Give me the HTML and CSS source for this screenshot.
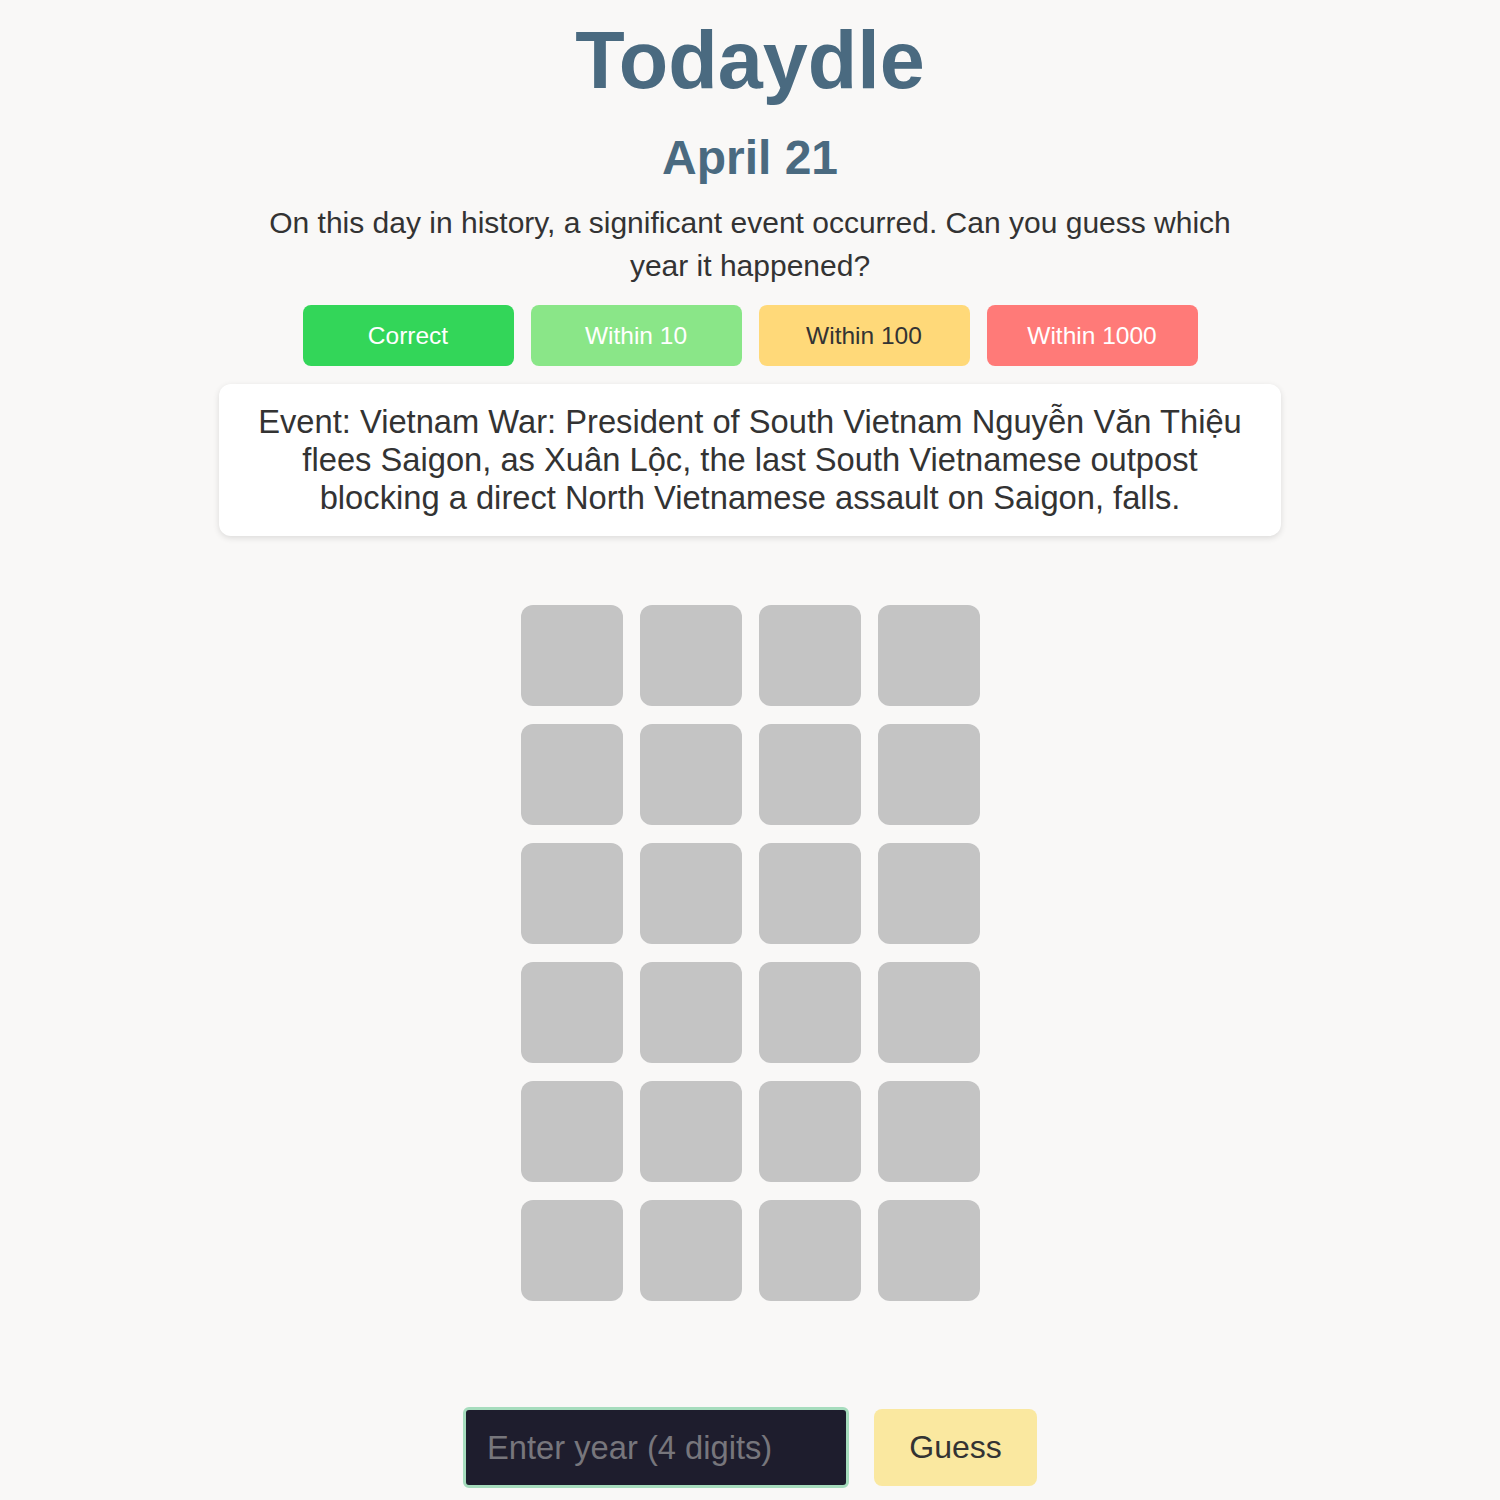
FILE: index.html
```html
<!DOCTYPE html>
<html lang="en">
<head>
<meta charset="utf-8">
<title>Todaydle</title>
<link rel="stylesheet" href="styles.css">
</head>
<body>
<main class="app">
  <h1 class="title">Todaydle</h1>
  <h2 class="date">April 21</h2>
  <p class="intro">On this day in history, a significant event occurred. Can you guess which year it happened?</p>
  <div class="legend">
    <div class="chip chip-correct">Correct</div>
    <div class="chip chip-10">Within 10</div>
    <div class="chip chip-100">Within 100</div>
    <div class="chip chip-1000">Within 1000</div>
  </div>
  <div class="event">Event: Vietnam War: President of South Vietnam Nguyễn Văn Thiệu flees Saigon, as Xuân Lộc, the last South Vietnamese outpost blocking a direct North Vietnamese assault on Saigon, falls.</div>
  <div class="board">
    <div class="tile"></div><div class="tile"></div><div class="tile"></div><div class="tile"></div>
    <div class="tile"></div><div class="tile"></div><div class="tile"></div><div class="tile"></div>
    <div class="tile"></div><div class="tile"></div><div class="tile"></div><div class="tile"></div>
    <div class="tile"></div><div class="tile"></div><div class="tile"></div><div class="tile"></div>
    <div class="tile"></div><div class="tile"></div><div class="tile"></div><div class="tile"></div>
    <div class="tile"></div><div class="tile"></div><div class="tile"></div><div class="tile"></div>
  </div>
  <form class="guess-form">
    <input class="year-input" type="text" placeholder="Enter year (4 digits)">
    <button class="guess-btn" type="button">Guess</button>
  </form>
</main>
</body>
</html>
```

FILE: styles.css
```css
html, body {
  margin: 0;
  padding: 0;
  background: #f9f8f7;
}
body {
  font-family: "Liberation Sans", Arial, sans-serif;
  color: #333333;
}
.app {
  display: flex;
  flex-direction: column;
  align-items: center;
}
.title {
  margin: 14px 0 0;
  font-size: 81px;
  font-weight: 700;
  line-height: 92px;
  color: #4a6a80;
}
.date {
  margin: 24px 0 0;
  font-size: 48px;
  font-weight: 700;
  line-height: 55px;
  color: #4a6a80;
}
.intro {
  margin: 16px 0 0;
  width: 980px;
  text-align: center;
  font-size: 30px;
  line-height: 43px;
  color: #333333;
}
.legend {
  display: flex;
  gap: 17px;
  margin-top: 18px;
}
.chip {
  width: 211px;
  height: 61px;
  border-radius: 8px;
  display: flex;
  align-items: center;
  justify-content: center;
  font-size: 24.5px;
  color: #ffffff;
}
.chip-correct { background: #33d659; }
.chip-10 { background: #8ae688; }
.chip-100 { background: #ffd979; color: #333333; }
.chip-1000 { background: #ff7a78; }
.event {
  margin-top: 18px;
  width: 1062px;
  box-sizing: border-box;
  padding: 19px 30px;
  background: #ffffff;
  border-radius: 12px;
  box-shadow: 0 2px 6px rgba(0, 0, 0, 0.12);
  text-align: center;
  font-size: 32.7px;
  line-height: 38px;
  color: #333333;
}
.board {
  margin-top: 69px;
  display: grid;
  grid-template-columns: repeat(4, 102px);
  grid-auto-rows: 101px;
  gap: 18px 17px;
}
.tile {
  background: #c4c4c4;
  border-radius: 12px;
}
.guess-form {
  margin-top: 106px;
  display: flex;
  align-items: center;
  gap: 25px;
}
.year-input {
  width: 386px;
  height: 81px;
  box-sizing: border-box;
  padding: 0 21px;
  background: #1e1d2d;
  border: 3px solid #a6dcbd;
  border-radius: 6px;
  font-family: "Liberation Sans", Arial, sans-serif;
  font-size: 32.7px;
  color: #dddddd;
  outline: none;
}
.year-input::placeholder {
  color: #77767c;
}
.guess-btn {
  width: 163px;
  height: 77px;
  border: none;
  border-radius: 8px;
  background: #fae8a0;
  font-family: "Liberation Sans", Arial, sans-serif;
  font-size: 32px;
  color: #333333;
}
```
